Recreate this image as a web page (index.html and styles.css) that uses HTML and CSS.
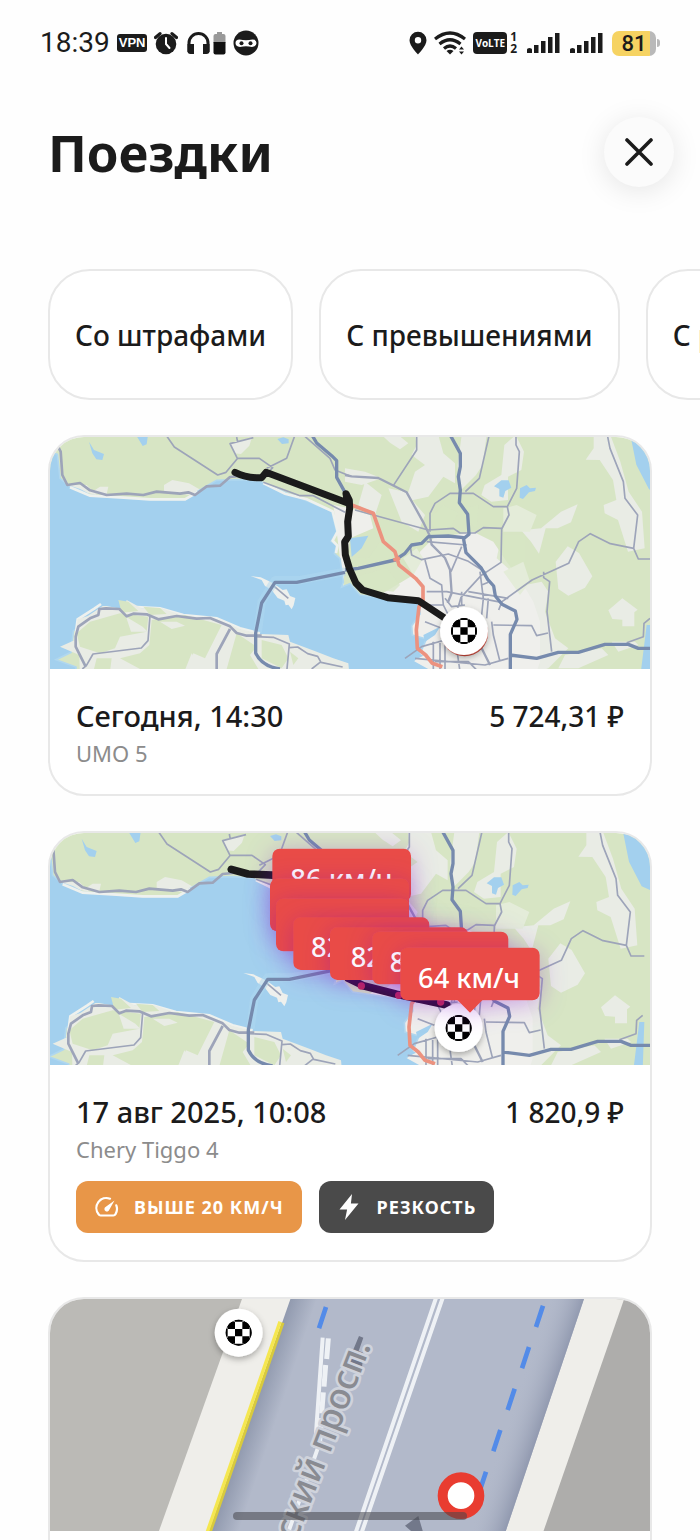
FILE: index.html
```html
<!DOCTYPE html>
<html lang="ru">
<head>
<meta charset="utf-8">
<meta name="viewport" content="width=device-width, initial-scale=1">
<title>Поездки</title>
<link rel="stylesheet" href="styles.css">
</head>
<body>
<svg class="defs" width="0" height="0" aria-hidden="true">
  <defs>
    <clipPath id="ball"><circle r="39"/></clipPath>
    <filter id="soft" x="-50%" y="-50%" width="200%" height="200%"><feDropShadow dx="0" dy="8" stdDeviation="9" flood-color="#000" flood-opacity=".3"/></filter>
    <filter id="glow" x="-60%" y="-100%" width="220%" height="320%"><feDropShadow dx="0" dy="12" stdDeviation="38" flood-color="#7a10c8" flood-opacity=".32"/></filter>
    <g id="finish">
      <circle r="72" fill="#fff" filter="url(#soft)"/>
      <g clip-path="url(#ball)">
        <path d="M-11-11h22v22h-22zM-33-33h22v22h-22zM11-33h22v22h-22zM-33 11h22v22h-22zM11 11h22v22h-22zM-11-55h22v22h-22zM-11 33h22v22h-22zM-55-11h22v22h-22zM33-11h22v22h-22z"/>
        <circle r="38" fill="none" stroke="#000" stroke-width="3"/>
      </g>
    </g>
    <g id="city">
      <path fill="#d7e5c4" d="M0 0h1900v760H0z"/>
      <!-- built-up land -->
      <g fill="#e9ece5">
        <path d="M568 55l68-18-8 25-25 25-20-2-5-12zM372 180l25-15 50 10 35 20-30 15-50-5-30-5zM150 205l30-20 25 0-5 22zM60 180l80 0 30 30-90-20z"/>
        <g transform="translate(915 0)">
          <path d="M110 30h50l30 25-25 18-30-20zM210 30h70l15 55 35 30 0 60-35-20-45 60-70 15 30-90 30-20-40-30 15-30zM350 30h75l-12 90-20 30-50 50-5-80zM478 60l34-30 25 50-8 55-40 20 0 70-50 5-30-20 10-30 50-30z"/>
          <path d="M722 104l24-34 0-40h50l30 80 25 90 40 60 8 110-50 10-30-95-40-20-3-25 38-15-10-60-40-60zM528 316l60-6 60-50 50-22-20 54-40 18-36 0-20 76-24-36zM632 410l36-46 34 20 40 70-22 34-50 24-30-20zM790 556l42-36 46 34-10 8v42h-36v-20l-30-2z"/>
          <path d="M380 420l60-40 40 40-10 40 20 60 50-40 50-10 20 30-10 60 30 80 40 30-60 60-100 30h-60zM660 690l110-20 20 20-90 40h-60zM800 650l70 0 10 10-60 20z"/>
          <path d="M60 170l50 40-20 60-50-30zM130 190l50 10 60 70-20 50-50-30zM0 130l60 10 50 20-60 20-50-10z"/>
        </g>
      </g>
      <path fill="#efefec" d="M880 240l50 10 60 20 10 40-70 30-10 60-10 70 10 60 70 0 30-20 100-60 20-70 40-40 120-20 60 30 40 60 50 70 30 50 20 60 0 120-20 60H1090l-120-200-55-50z"/>
      <path fill="#d7e5c4" d="M985 400l50-70 35 70-25 10-60 20-40 10-30-5 10-40zM945 455l95-25 40 50-20 20-70-10-40-15zM1170 280l40-40 45 25-30 50-40 0zM1275 250l40-10-5 70-25-20zM1385 330l70 0 0 80-45 25-40-35z" opacity=".75"/>
      <path fill="#e4ecd9" d="M1390 250l40-10 60 30-20 50-80 0zM1390 440l60-30 20 60-30 40zM1090 400l40-30 20 30-30 50z"/>
      <!-- gulf -->
      <path fill="#a3d0ee" stroke="#b0d7ef" stroke-width="5" d="M0 70l52 18 8 72 30 25 30 9 30 17 80 6 100 8h105l35-24 30-18 30-17 70-2 60 5 80 35 60 23 75 32 15 62-17 28 17 12-7 25 17 15 10 70-5 15 25-10 30 34 103 15 47 8 28-6 2 40-25 35 2 28 42 12-16 38-24 30 4 30-30 40H930l-5-35-45-15-50-20-80-30-10-18-85-3-60-15-70-32-100-10-70-20-80-5-40-22-80 20-5 12-50 30-7 65-45 22 60 22 0 50H0z"/>
      <path fill="none" stroke="#eef1ee" stroke-width="8" d="M90 187l60 25 90 5 90 6h105l38-22M670 174l65 32 65 17 78 36 15 60-15 28 14 15-4 22M105 645l8-62 50-32 20-14M290 546l70 4 70 20 100 10 70 30 60 15"/>
      <path fill="#a3d0ee" d="M147 50l15 25 30 12-5 18-18-2-12-18zM288 30h36l-4 28-12 5zM712 42l18-5 16 6 0 12-20 2zM1362 184l22-18 22 0 8 22-18 10-6 20-12-4 0-22zM1440 190l20-10 10 10 18-2-3 10-18 4-18 20-10-4zM930 340l55-8-20 38-30 26zM1765 0h90v205l-28-12-38-74zM1820 600l15 0-5 145h-28z"/>
      <path fill="#a3d0ee" d="M1150 630l50-25-15 25-30 20zM1100 710l30-30 20 12-30 15 50 28h-55z"/>
      <path fill="#eef0ed" d="M632 453l30 4 38 18 28 20 12-2 10 20 16 6-5 22-6 12-10-14-8 2-4-14-20-8-18-24-20-12-10-18z"/>
      <!-- southern shore -->
      <path fill="#e9ece5" d="M118 690l-58-25 45-20 8-62 30-10 45-30 12 0 50 10 10-28 45 25 60 0 65 22 100 10 70 30 60 15 85 3 5 20 80 30 50 20 45 15 5 50H120z"/>
      <path fill="#d7e5c4" d="M150 590l90-25 85 10-5 45-80 15-15 35-45 15-60-20-10-40zM235 525l30 5 30 28-50 5zM310 545l50 4 20 18-50 3zM335 585l100-15 110 30-50 100-35-15-20 47H300l-60-32 60-15 28-25zM590 625l60 40-20 25 25 42H560zM665 645l60 15 20 40-20 30-60-30zM170 700l45 0-5 40h-50zM750 680l25 20-15 20z"/>
      <path fill="#e9ece5" d="M258 575l50 30 15 15-50 0zM360 590l50 0 25 12-40 10zM455 685l30 50h-50z"/>
      <!-- ordinary roads -->
      <g fill="none" stroke="#9da4b9" stroke-width="5" stroke-linejoin="round">
        <path stroke-width="8" d="M50 20l2 40 10 20 5 70 15 30 38-6 30 22 50 14 60-4 50 4 40-10 70 6 25-4 20 8 35-26 40-2 30-26 30-3h55M137 725l-30-60 0-30 8-30 35-25 25-10 3-18 20-2 40 2 22 22 20-8 40 2 35 15 55-10 60 8 40-2 60 25 20 20 30 8h45M530 740v-53l40-75"/>
        <path d="M378 30l25 36 130 84 25-8 35-42h65l40 28-25 26M592 100l-22-44 70-18M590 36l3 16M680 130l60-30 25-70M670 172l110 40h40l95 50M700 482l45 38M790 30l80 70 15 35 45 18M330 572l-6 75-20 22-145 18-20 35-12 10M645 635l55 2 48 20-8 85M748 668l25-2 30 20 30 8 10 18 65 14M840 712l-25 20"/>
      </g>
      <g transform="translate(915 0)" fill="none" stroke="#9da4b9" stroke-width="5" stroke-linejoin="round">
        <path stroke-width="7" d="M0 150l20 4 80 5 85 43 50 90 20 42 5 25 40 40 15 35 5 70-12 30M360 560l50 110 25 50"/>
        <path d="M215 20v55l-70 107M435 20l-32 140-42 40M513 20v40l10 20-8 110-28 55 5 25-22 42-2 100-60 40-60 65-10 35M255 320v-55l15-30 45-30h70l60 40h40M30 255l220 60 75-5 20 14h45l25-16 55 2M785 20l10 50 40 100 5 50 38 50-12 100 14 32h40M866 370l-70-14-60-30-35 24-30 65-110 50-90 65-10 25M596 440v18l18 12-8 90 14 120M245 350l120 10M195 360l5 30 30 14 80-17 60 22 55 35M350 365l-32 75M240 405l15 55 35 20 5 60M245 500h60l90 18 75 14M445 600l115 2 15 30 34-8M405 440l10 80-5 50M370 500l120 20M350 500v40M430 520l-5 60M180 700l50-35 70-20 0 95M265 650v90M285 650v90M235 540l60 0 30 60 20 140M440 590l5 40 20 80M210 700l210 20 70-20M330 670l60 10M270 710l100 0 30 30M410 480l20-8M300 520l20 25 40-5M240 590l50 20M915 580l-18 15-2 40-50 18"/>
      </g>
      <!-- ring road -->
      <g fill="none" stroke="#768aad" stroke-width="10" stroke-linejoin="round">
        <path stroke="#b0d7ef" stroke-width="26" d="M915 440l-135 26h-75l-40 65-12 90" opacity=".5"/>
        <path d="M810 20l20 34 45 38 15 15v50l25 45M720 732c-35-5-60-20-73-48v-60l18-90 40-62h65l145-30"/>
        <g transform="translate(915 0)"><path d="M310 20l36 65v40l-6 30 6 40-3 38 25 35 4 60-18 15M0 435l40-5 110-25 30-20 20-25 30-5 20-20 60-2 45 5 8 45 45 45 20 35 18 20 5 30 20 25 40 20 5 25-20 45 0 110M495 690l80 10 65-18h60l80-24h70l30 12h80"/></g>
      </g>
      <path fill="none" stroke="#ec927f" stroke-width="11" stroke-linejoin="round" d="M935 240l65 25 30 85 35 30 12 40 50 40 22 25v45l-12 15-8 70 3 55 25 20 20 25 30 10M1060 405l20-5"/>
    </g>
  </defs>
</svg>

<div class="app">
  <div class="status">
    <div class="status-side">
      <span class="clock">18:39</span>
      <span class="vpn">VPN</span>
      <svg width="24" height="24" viewBox="0 0 24 24"><circle cx="12" cy="13" r="10.3" fill="#1b1b1b"/><path d="M1.5 6.5L6 2.6M22.5 6.5L18 2.6" stroke="#1b1b1b" stroke-width="3.2" stroke-linecap="round"/><path d="M12 7v6l3.5 4" fill="none" stroke="#fff" stroke-width="2" stroke-linecap="round"/></svg>
      <svg class="phones" width="39" height="24" viewBox="0 0 39 24"><path d="M2 21V12a9.500 9.500 0 0 1 19 0v9" fill="none" stroke="#1b1b1b" stroke-width="3"/><path d="M.5 13h6.500v10H3.500a3 3 0 0 1-3-3zM22.500 13H16v10h3.500a3 3 0 0 0 3-3z" fill="#1b1b1b"/><path d="M30 1h5v2h1.500q2 0 2 2v7h-12V5q0-2 2-2H30z" fill="#999"/><path d="M26.500 11h12v10.500q0 2-2 2h-8q-2 0-2-2z" fill="#111"/></svg>
      <svg width="26" height="26" viewBox="0 0 26 26"><circle cx="13" cy="13" r="12.5" fill="#1b1b1b"/><path d="M6.500 9.500q6.500 1.500 13 0 4 0 4 3.500t-4.500 4q-6-1.500-12 0-4.500-.5-4.500-4t4-3.500z" fill="#fff"/><circle cx="8.500" cy="13.200" r="2" fill="#1b1b1b"/><circle cx="17.500" cy="13.200" r="2" fill="#1b1b1b"/></svg>
    </div>
    <div class="status-side">
      <svg width="18" height="24" viewBox="0 0 18 24"><path d="M9 .8a8.500 8.500 0 0 1 8.500 8.500C17.500 15 9 23.500 9 23.500S.5 15 .5 9.300A8.500 8.500 0 0 1 9 .8zm0 5.200a3.200 3.200 0 1 0 0 6.400A3.200 3.200 0 0 0 9 6z" fill="#1b1b1b" fill-rule="evenodd"/></svg>
      <svg width="32" height="24" viewBox="0 0 32 24"><g fill="none" stroke="#1b1b1b" stroke-width="3.200"><path d="M1 8q15-12 30 0M5.500 13q10.500-8.500 21 0M10 17.500q6-5 12 0"/></g><path d="M12.500 20q3.500-2.500 7 0L16 23.500z" fill="#1b1b1b"/><path d="M25 18.500l2.500-3 2.500 3zM25 20.500l2.500 3 2.500-3z" fill="#1b1b1b"/></svg>
      <span class="volte">VoLTE</span>
      <span class="sims"><span>1</span><span>2</span></span>
      <svg class="bars" width="33" height="20" viewBox="0 0 33 20"><path d="M0 16.500q0-1.500 2.500-1.500t2.500 1.500V20H0zM7 12h4.500v8H7zM14 8h4.500v12H14zM21 4h4.500v16H21zM28 0h4.500v20H28z" fill="#1b1b1b"/></svg>
      <svg class="bars" width="33" height="20" viewBox="0 0 33 20"><path d="M0 16.500q0-1.500 2.500-1.500t2.500 1.500V20H0zM7 12h4.500v8H7zM14 8h4.500v12H14zM21 4h4.500v16H21zM28 0h4.500v20H28z" fill="#1b1b1b"/></svg>
      <span class="battery">81</span>
      <span class="battery-tip"></span>
    </div>
  </div>

  <header class="header">
    <h1 class="title">Поездки</h1>
    <button class="close" type="button" aria-label="Закрыть"><svg width="28" height="28" viewBox="0 0 28 28"><path d="M2 2l24 24M26 2L2 26" stroke="#1b1b1b" stroke-width="3.6" stroke-linecap="round"/></svg></button>
  </header>

  <div class="chips">
    <button class="chip" type="button">Со штрафами</button>
    <button class="chip" type="button">С превышениями</button>
    <button class="chip" type="button">С резкостью</button>
  </div>

  <main class="trips">
    <article class="card">
      <svg class="map" viewBox="30 36 1800 696" preserveAspectRatio="xMidYMid slice">
        <use href="#city"/>
        <path fill="none" stroke="#1b1b1b" stroke-width="21" stroke-linecap="round" stroke-linejoin="round" d="M585 142q35 18 80 16l13-16 245 92-5-28 10 20 1 24-6 40 2 44-11 17 2 38 12 41 20 45 20 20 75 23 92 9 85 56"/>
        <circle cx="1274" cy="624" r="70" fill="#cf4a3c"/>
        <use href="#finish" x="1272" y="618"/>
      </svg>
      <div class="info">
        <div class="row"><h2 class="when">Сегодня, 14:30</h2><span class="price">5 724,31 ₽</span></div>
        <p class="car">UMO 5</p>
      </div>
    </article>

    <article class="card">
      <svg class="map" viewBox="30 39 1800 696" preserveAspectRatio="xMidYMid slice">
        <use href="#city" x="-22" y="6"/>
        <path fill="none" stroke="#1b1b1b" stroke-width="23" stroke-linecap="round" stroke-linejoin="round" d="M574 148l50 14 90 4"/>
        <path fill="none" stroke="#2b0f2e" stroke-width="23" stroke-linecap="round" stroke-linejoin="round" d="M925 475l45 22 100 26 150 32"/>
        <g fill="#c42a50"><circle cx="964" cy="498" r="11"/><circle cx="1076" cy="526" r="11"/><circle cx="1202" cy="546" r="11"/></g>
        <use href="#finish" x="1256" y="624"/>
        <g class="speeds">
          <g filter="url(#glow)"><rect x="697" y="86" width="416" height="158" rx="22"/></g><text x="751" y="206">86 км/ч</text>
          <g filter="url(#glow)"><rect x="690" y="176" width="417" height="158" rx="22"/></g><text x="745" y="296">84 км/ч</text>
          <g filter="url(#glow)"><rect x="708" y="236" width="399" height="158" rx="22"/></g>
          <g filter="url(#glow)"><rect x="760" y="292" width="408" height="158" rx="22"/></g><text x="813" y="412">82</text>
          <g filter="url(#glow)"><rect x="870" y="322" width="415" height="158" rx="22"/></g><text x="932" y="442">82</text>
          <g filter="url(#glow)"><rect x="997" y="335" width="408" height="158" rx="22"/></g><text x="1049" y="455">8</text>
          <g filter="url(#glow)"><rect x="1081" y="383" width="418" height="158" rx="22"/><path d="M1250 538h80l-40 40z"/></g><text x="1134" y="503">64 км/ч</text>
        </g>
      </svg>
      <div class="info">
        <div class="row"><h2 class="when">17 авг 2025, 10:08</h2><span class="price">1 820,9 ₽</span></div>
        <p class="car">Chery Tiggo 4</p>
        <div class="tags">
          <span class="tag tag-speed"><svg width="24" height="24" viewBox="0 0 24 24"><path d="M15 3.700A10 10 0 0 0 3.600 19.300q.6 1.200 2 1.200h12.800q1.400 0 2-1.200a10 10 0 0 0 .9-9" fill="none" stroke="#fff" stroke-width="2.200" stroke-linecap="round"/><path d="M19.500 5.500l-5.200 9.300a2.500 2.500 0 1 1-3.800-2.800z" fill="#fff"/></svg>ВЫШЕ 20 КМ/Ч</span>
          <span class="tag tag-sharp"><svg width="24" height="28" viewBox="0 0 24 28"><path d="M14 1L1.500 16.500h7.600L7 27l13.500-16.500h-7.600z" fill="#fff"/></svg>РЕЗКОСТЬ</span>
        </div>
      </div>
    </article>

    <article class="card">
      <svg class="map" viewBox="30 42 1800 696" preserveAspectRatio="xMidYMid slice">
        <defs>
          <linearGradient id="kerbL" gradientUnits="userSpaceOnUse" x1="625" y1="390" x2="705" y2="417"><stop stop-color="#8e97ac"/><stop offset="1" stop-color="#b2b9ca"/></linearGradient>
          <linearGradient id="kerbR" gradientUnits="userSpaceOnUse" x1="1514" y1="390" x2="1420" y2="358"><stop stop-color="#929ab0"/><stop offset="1" stop-color="#b2b9ca" stop-opacity="0"/></linearGradient>
        </defs>
        <path fill="#bbbab6" d="M0 0h700v760H0z"/>
        <path fill="#aeadab" d="M1500 0h400v760h-400z"/>
        <path fill="#efeeea" d="M621 0h1146l-264 760H349z"/>
        <path fill="url(#kerbL)" d="M766 0h880l-256 760H500z"/>
        <path fill="url(#kerbR)" d="M1500 0h146l-256 760h-150z"/>
        <path stroke="#d8ca3d" stroke-width="9" d="M729 113L511 740"/><path stroke="#f5e750" stroke-width="10" d="M720 110L502 740"/>
        <g stroke="#eef1f5" stroke-width="12" fill="none"><path d="M1189 36L948 740M1209 36L966 740M848 158l-23 330M834 488l-88 250"/><path stroke-width="15" d="M865 160l-5 62M857 240l-5 65M850 322l-5 63M845 400l-8 90"/></g>
        <path stroke="#538be8" stroke-width="14" d="M858 66l-21 64M1509 62l-21 64M1467 186l-21 64M1424 311l-21 64M1381 435l-21 64M1338 560l-21 64"/>
        <path fill="#72788a" d="M957 153l13 5-14 40 14 5-4 46-30-12-20-14 25-32zM1135 693l-40 29 25 22h30z"/>
        <text class="street" text-anchor="end" transform="translate(994 182) rotate(-69)">ский просп.</text>
        <use href="#finish" x="596" y="143"/>
        <circle cx="1263" cy="632" r="55" fill="#fff" stroke="#e93c30" stroke-width="30"/>
      </svg>
      <div class="info"></div>
    </article>
  </main>
  <div class="home-bar"></div>
</div>
</body>
</html>
```
FILE: styles.css
```css
* { box-sizing: border-box; }
body { margin: 0; background: #fefefe; color: #1b1b1b; font-family: "Noto Sans", "Open Sans", sans-serif; }
h1, h2, p { margin: 0; }
button { font: inherit; color: inherit; }
.defs { position: absolute; }
.app { position: relative; height: 100vh; overflow: hidden; }

.status { display: flex; justify-content: space-between; align-items: center; height: 86px; padding: 0 40px; }
.status-side { display: flex; align-items: center; gap: 7px; }
.clock { font: 400 28px/32px Roboto, sans-serif; }
.vpn { padding: 0 2px; border-radius: 3px; background: #1b1b1b; color: #fff; font: 700 13px/18px "Liberation Sans", sans-serif; }
.phones { margin-left: 2px; }
.volte { padding: 0 2px; border-radius: 4px; background: #1b1b1b; color: #fff; font: 700 10px/22px "Open Sans", sans-serif; }
.sims { display: flex; flex-direction: column; margin-left: -4px; font: 700 12px/12px "Open Sans", sans-serif; }
.bars { margin-left: 3px; }
.battery { width: 44px; margin-left: 2px; border-radius: 7px; background: linear-gradient(90deg, #f6d362 38px, #b9b9b9 38px); font: 500 22px/25px Roboto, sans-serif; text-align: center; }
.battery-tip { width: 3px; height: 8px; margin-left: -6px; border-radius: 0 3px 3px 0; background: #b9b9b9; }

.header { display: flex; justify-content: space-between; align-items: center; padding: 31px 26px 0 48px; }
.title { font-size: 51px; line-height: 70px; font-weight: 700; }
.close { display: flex; align-items: center; justify-content: center; width: 70px; height: 70px; padding: 0; border: 0; border-radius: 50%; background: #fbfbfb; box-shadow: 0 4px 28px rgba(0, 0, 0, .1); }

.chips { display: flex; gap: 26px; margin-top: 82px; padding-left: 48px; overflow: hidden; }
.chip { flex: none; height: 131px; padding: 0 25px; border: 2px solid #e8e8e8; border-radius: 42px; background: #fff; font-size: 28px; line-height: 40px; font-weight: 500; }

.trips { display: flex; flex-direction: column; gap: 35px; padding: 35px 48px 0; }
.card { flex: none; overflow: hidden; border: 2px solid #e8e8e8; border-radius: 36px; background: #fff; }
.map { display: block; width: 100%; height: 232px; }
.info { padding: 27px 26px; }
.row { display: flex; justify-content: space-between; }
.when, .price { font-size: 29px; line-height: 40px; font-weight: 500; }
.price { font-size: 28px; }
.car { margin-top: 3px; color: #8c8c8c; font-size: 22px; line-height: 28px; }
.tags { display: flex; gap: 17px; margin-top: 18px; }
.tag { display: flex; align-items: center; gap: 15px; height: 52px; padding: 0 18px 0 19px; border-radius: 12px; color: #fff; font-size: 18px; font-weight: 700; letter-spacing: 1px; }
.tag-speed { background: #e89648; }
.tag-sharp { background: #4a4a4a; }

.speeds { fill: #e94b46; }
.speeds text { fill: #fff; font-size: 82px; font-weight: 500; }
.street { fill: #898b92; stroke: #cfd3dc; stroke-width: 16px; stroke-linejoin: round; paint-order: stroke; font-size: 108px; font-weight: 500; }

.home-bar { position: absolute; left: 50%; bottom: 20px; width: 234px; height: 8px; margin-left: -117px; border-radius: 4px; background: rgba(70, 70, 75, .55); }
```
